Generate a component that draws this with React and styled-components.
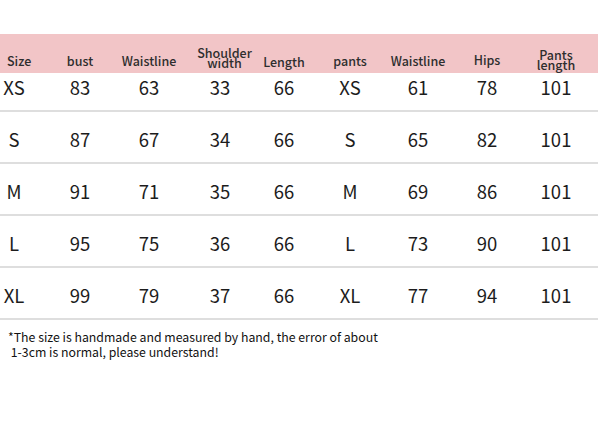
import React from "react";
import styled, { createGlobalStyle } from "styled-components";

const Global = createGlobalStyle`
  html, body { margin: 0; padding: 0; background: #fff; }
  body { font-family: "Noto Sans CJK SC", "Noto Sans", sans-serif; }
`;

const COLS = "47px 66px 72px 70px 58px 74px 62px 76px 62px 1fr";

const Page = styled.div`
  width: 600px;
  height: 425px;
  padding-top: 34px;
  box-sizing: border-box;
  background: #fff;
`;

const Table = styled.div`
  width: 598px;
`;

const HeaderRow = styled.div`
  display: grid;
  grid-template-columns: ${COLS};
  height: 39px;
  background: #f2c5c7;
`;

const HeadCell = styled.div`
  display: flex;
  align-items: flex-end;
  justify-content: ${(p) => (p.$first ? "flex-start" : "center")};
  padding-left: ${(p) => (p.$first ? 7 : p.$pl ?? 0)}px;
  padding-bottom: ${(p) => p.$pb ?? 5}px;
  font-size: 12.5px;
  font-weight: 500;
  color: #2e2e2e;
  line-height: ${(p) => (p.$two ? "10px" : "14px")};
  text-align: center;
`;

const HeadLine = styled.div`
  white-space: nowrap;
`;

const Row = styled.div`
  display: grid;
  grid-template-columns: ${COLS};
  height: ${(p) => (p.$first ? 39 : 52)}px;
  box-sizing: border-box;
  border-bottom: 2px solid #dedede;
`;

const Cell = styled.div`
  display: flex;
  align-items: flex-end;
  justify-content: center;
  padding-right: ${(p) => (p.$first ? "19px" : "0")};
  padding-bottom: 11px;
  font-size: 18.5px;
  line-height: 24px;
  color: #1c1c1c;
`;

const Note = styled.div`
  margin-top: 10px;
  padding-left: 8px;
  font-size: 12.3px;
  line-height: 15px;
  color: #111;
  white-space: pre;
`;

const heads = [
  { t: "Size" },
  { t: "bust" },
  { t: "Waistline" },
  { t: "Shoulder\nwidth", two: true, pb: 5, pl: 9 },
  { t: "Length", pb: 4 },
  { t: "pants" },
  { t: "Waistline" },
  { t: "Hips", pb: 6 },
  { t: "Pants\nlength", two: true, pb: 3 },
];

const rows = [
  ["XS", 83, 63, 33, 66, "XS", 61, 78, 101],
  ["S", 87, 67, 34, 66, "S", 65, 82, 101],
  ["M", 91, 71, 35, 66, "M", 69, 86, 101],
  ["L", 95, 75, 36, 66, "L", 73, 90, 101],
  ["XL", 99, 79, 37, 66, "XL", 77, 94, 101],
];

export default function App() {
  return (
    <Page>
      <Global />
      <Table>
        <HeaderRow>
          {heads.map((h, i) => (
            <HeadCell key={i} $first={i === 0} $two={h.two} $pb={h.pb} $pl={h.pl}>
              {h.two ? (
                <span>
                  {h.t.split("\n").map((l, j) => (
                    <HeadLine key={j}>{l}</HeadLine>
                  ))}
                </span>
              ) : (
                h.t
              )}
            </HeadCell>
          ))}
        </HeaderRow>
        {rows.map((r, ri) => (
          <Row key={ri} $first={ri === 0}>
            {r.map((v, ci) => (
              <Cell key={ci} $first={ci === 0}>
                {v}
              </Cell>
            ))}
          </Row>
        ))}
      </Table>
      <Note>
        {"*The size is handmade and measured by hand, the error of about\n 1-3cm is normal, please understand!"}
      </Note>
    </Page>
  );
}
